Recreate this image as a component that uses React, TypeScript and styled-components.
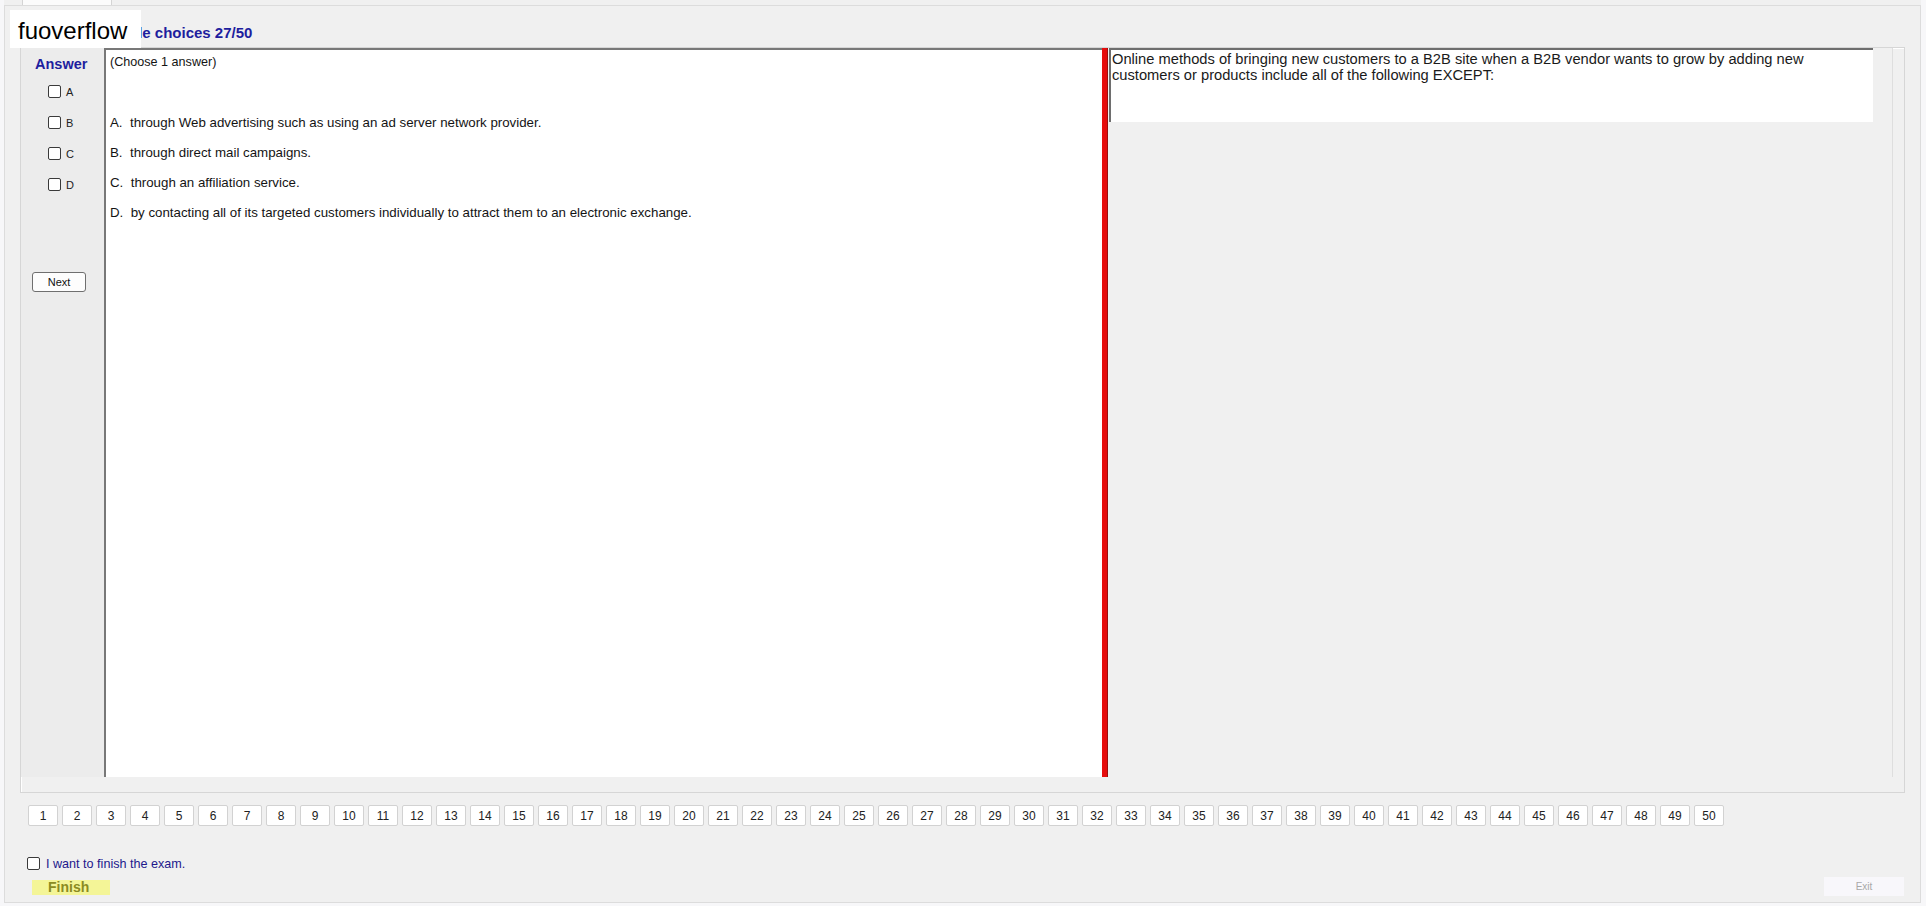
import React from "react";
import styled, { createGlobalStyle } from "styled-components";

const GlobalStyle = createGlobalStyle`
  html, body {
    margin: 0;
    padding: 0;
    background: #f7f7f9;
  }
  body {
    font-family: "Liberation Sans", Arial, sans-serif;
    color: #111;
  }
`;

const Page = styled.div`
  position: relative;
  width: 1926px;
  height: 906px;
  overflow: hidden;
  padding: 0 5px 0 4px;
  box-sizing: border-box;
`;

const TabStrip = styled.div`
  height: 5px;
  display: flex;
  background: #f0f0f0;
`;

const Tab = styled.div`
  margin-left: 18px;
  width: 88px;
  height: 5px;
  background: #fbfbfb;
  border-left: 1px solid #d4d4d4;
  border-right: 1px solid #d4d4d4;
`;

const TabPage = styled.div`
  height: 898px;
  box-sizing: border-box;
  border: 1px solid #dcdcdc;
  background: #f0f0f0;
  padding: 0 15px 0 15px;
  display: flex;
  flex-direction: column;
`;

const TitleRow = styled.div`
  height: 41px;
  box-sizing: border-box;
  padding: 18px 0 0 74px;
`;

const Title = styled.h1`
  margin: 0;
  font-size: 15px;
  line-height: 18px;
  font-weight: bold;
  color: #1e1e9e;
`;

const Group = styled.div`
  height: 746px;
  box-sizing: border-box;
  border: 1px solid #d6d6d6;
  box-shadow: inset 1px 1px 0 #ffffff;
  display: flex;
  padding: 0 11px 15px 0;
`;

const AnswerCol = styled.div`
  width: 83px;
  flex: 0 0 83px;
  display: flex;
  flex-direction: column;
  background: #ececec;
`;

const AnswerLabel = styled.div`
  height: 28px;
  box-sizing: border-box;
  padding: 8px 0 0 14px;
  font-size: 14.5px;
  line-height: 16px;
  font-weight: bold;
  color: #1e1e9e;
`;

const Choice = styled.label`
  height: 31px;
  display: flex;
  align-items: center;
  padding-left: 27px;
  gap: 5px;
  font-size: 11px;
  color: #222;
`;

const Box = styled.span`
  width: 11px;
  height: 11px;
  border: 1px solid #3a3a3a;
  border-radius: 2px;
  background: #fff;
  flex: 0 0 auto;
`;

const NextButton = styled.button`
  margin: 72px 0 0 11px;
  width: 54px;
  height: 20px;
  padding: 0;
  border: 1px solid #6f6f6f;
  border-radius: 3px;
  background: #fdfdfd;
  font-family: "Liberation Sans", Arial, sans-serif;
  font-size: 11px;
  color: #111;
`;

const QuestionPanel = styled.div`
  width: 998px;
  flex: 0 0 998px;
  box-sizing: border-box;
  background: #fff;
  border-top: 2px solid #787878;
  border-left: 2px solid #787878;
  padding: 5px 0 0 4px;
  line-height: 15px;
  color: #141414;
`;

const Prompt = styled.div`
  font-size: 12.6px;
  margin-bottom: 45px;
`;

const Option = styled.div`
  font-size: 13.3px;
  margin-bottom: 15px;
  white-space: pre;
`;

const Splitter = styled.div`
  width: 6px;
  flex: 0 0 6px;
  background: #e60d0d;
  border-right: 1px solid #9a1010;
  box-sizing: border-box;
`;

const RightArea = styled.div`
  flex: 1;
  padding-left: 1px;
  border-right: 1px solid #dedede;
  background: #f0f0f0;
`;

const StemBox = styled.div`
  width: 764px;
  height: 74px;
  box-sizing: border-box;
  background: #fff;
  border-top: 2px solid #6e6e6e;
  border-left: 2px solid #6e6e6e;
  padding: 1px 0 0 1px;
  font-size: 14.7px;
  line-height: 16px;
  color: #1a1a1a;
`;

const NumberRow = styled.div`
  margin: 12px 0 0 8px;
  display: flex;
  gap: 4px;
`;

const NumButton = styled.button`
  width: 30px;
  height: 21px;
  padding: 0;
  box-sizing: border-box;
  border: 1px solid #d2d2d2;
  border-radius: 2px;
  background: #fff;
  font-family: "Liberation Sans", Arial, sans-serif;
  font-size: 12px;
  color: #222;
`;

const FinishCheck = styled.label`
  margin: 31px 0 0 7px;
  height: 13px;
  display: flex;
  align-items: center;
  gap: 6px;
  font-size: 12.6px;
  color: #22188c;
`;

const BottomRow = styled.div`
  margin-top: 7px;
  display: flex;
  justify-content: space-between;
  align-items: flex-start;
`;

const FinishButton = styled.div`
  margin: 3px 0 0 12px;
  width: 78px;
  height: 15px;
  box-sizing: border-box;
  padding-left: 16px;
  background: #f4f597;
  font-size: 14px;
  line-height: 15px;
  font-weight: bold;
  color: #8b8b22;
`;

const ExitButton = styled.div`
  margin-right: 1px;
  width: 80px;
  height: 19px;
  background: #f8f7fb;
  font-size: 10px;
  line-height: 19px;
  text-align: center;
  color: #a8a8a8;
`;

const Watermark = styled.div`
  position: absolute;
  left: 10px;
  top: 10px;
  width: 131px;
  height: 38px;
  box-sizing: border-box;
  padding: 4px 0 0 8px;
  background: #fff;
  font-size: 24px;
  line-height: 34px;
  color: #000;
`;

const options = [
  "A.  through Web advertising such as using an ad server network provider.",
  "B.  through direct mail campaigns.",
  "C.  through an affiliation service.",
  "D.  by contacting all of its targeted customers individually to attract them to an electronic exchange.",
];

export default function App() {
  const numbers = Array.from({ length: 50 }, (_, i) => i + 1);
  return (
    <>
      <GlobalStyle />
      <Page>
        <TabStrip>
          <Tab />
        </TabStrip>
        <TabPage>
          <TitleRow>
            <Title>Multiple choices 27/50</Title>
          </TitleRow>
          <Group>
            <AnswerCol>
              <AnswerLabel>Answer</AnswerLabel>
              {["A", "B", "C", "D"].map((l) => (
                <Choice key={l}>
                  <Box />
                  {l}
                </Choice>
              ))}
              <NextButton>Next</NextButton>
            </AnswerCol>
            <QuestionPanel>
              <Prompt>(Choose 1 answer)</Prompt>
              {options.map((o) => (
                <Option key={o}>{o}</Option>
              ))}
            </QuestionPanel>
            <Splitter />
            <RightArea>
              <StemBox>
                Online methods of bringing new customers to a B2B site when a B2B vendor wants to grow by adding new
                customers or products include all of the following EXCEPT:
              </StemBox>
            </RightArea>
          </Group>
          <NumberRow>
            {numbers.map((n) => (
              <NumButton key={n}>{n}</NumButton>
            ))}
          </NumberRow>
          <FinishCheck>
            <Box />I want to finish the exam.
          </FinishCheck>
          <BottomRow>
            <FinishButton>Finish</FinishButton>
            <ExitButton>Exit</ExitButton>
          </BottomRow>
        </TabPage>
        <Watermark>fuoverflow</Watermark>
      </Page>
    </>
  );
}
